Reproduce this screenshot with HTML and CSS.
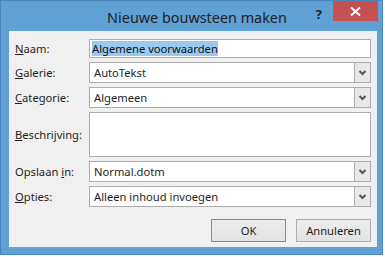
FILE: index.html
```html
<!DOCTYPE html>
<html lang="nl">
<head>
  <meta charset="UTF-8">
  <title>Nieuwe bouwsteen maken</title>
  <link rel="stylesheet" href="styles.css">
</head>
<body>
  <div class="window">
    <div class="titlebar">
      <span class="title">Nieuwe bouwsteen maken</span>
      <span class="help">?</span>
      <span class="close">
        <svg width="11" height="9" viewBox="0 0 11 9"><path d="M1 0.5 L10 8.5 M10 0.5 L1 8.5" stroke="#fff" stroke-width="2"/></svg>
      </span>
    </div>

    <!-- Dialoog inhoud -->
    <div class="client">
      <div class="row">
        <label><u>N</u>aam:</label>
        <div class="field input"><span class="selected">Algemene voorwaarden</span></div>
      </div>
      <div class="row">
        <label><u>G</u>alerie:</label>
        <div class="field select"><span class="value">AutoTekst</span><span class="arrow"><svg width="9" height="6" viewBox="0 0 9 6"><path d="M1.5 1 L4.5 4 L7.5 1" stroke="#555" stroke-width="2" fill="none"/></svg></span></div>
      </div>
      <div class="row">
        <label><u>C</u>ategorie:</label>
        <div class="field select"><span class="value">Algemeen</span><span class="arrow"><svg width="9" height="6" viewBox="0 0 9 6"><path d="M1.5 1 L4.5 4 L7.5 1" stroke="#555" stroke-width="2" fill="none"/></svg></span></div>
      </div>
      <div class="row tall">
        <label><u>B</u>eschrijving:</label>
        <div class="field textarea"></div>
      </div>
      <div class="row">
        <label>Opslaan <u>i</u>n:</label>
        <div class="field select"><span class="value">Normal.dotm</span><span class="arrow"><svg width="9" height="6" viewBox="0 0 9 6"><path d="M1.5 1 L4.5 4 L7.5 1" stroke="#555" stroke-width="2" fill="none"/></svg></span></div>
      </div>
      <div class="row">
        <label><u>O</u>pties:</label>
        <div class="field select"><span class="value">Alleen inhoud invoegen</span><span class="arrow"><svg width="9" height="6" viewBox="0 0 9 6"><path d="M1.5 1 L4.5 4 L7.5 1" stroke="#555" stroke-width="2" fill="none"/></svg></span></div>
      </div>
      <div class="buttons">
        <button class="btn default">OK</button>
        <button class="btn">Annuleren</button>
      </div>
    </div>
  </div>
</body>
</html>
```

FILE: styles.css
```css
body {
  margin: 0;
  background: #ffffff;
  font-family: "Noto Sans", "Open Sans", sans-serif;
  font-size: 11.2px;
  color: #1e1e1e;
}
.window {
  width: 383px;
  height: 255px;
  box-sizing: border-box;
  background: #5fa0d5;
  border: 1px solid #4b86bb;
  display: flex;
  flex-direction: column;
  padding: 0 5px 7px 8px;
}
.titlebar {
  height: 30px;
  position: relative;
  display: flex;
  justify-content: center;
  align-items: center;
}
.title {
  font-size: 14.4px;
  color: #1f1f1f;
  margin-top: 2px;
  margin-left: 8px;
}
.help {
  position: absolute;
  right: 55px;
  top: 4px;
  font-weight: bold;
  font-size: 13px;
  color: #1f1f1f;
}
.close {
  position: absolute;
  right: -1px;
  top: 0;
  width: 45px;
  height: 20px;
  background: #c75050;
  display: flex;
  justify-content: center;
  align-items: center;
}
.client {
  flex: 1;
  background: #f0f0f0;
  padding: 8px 6px 0 6px;
  display: flex;
  flex-direction: column;
  gap: 4px;
}
.row {
  display: flex;
  align-items: center;
  height: 21px;
}
.row:first-child {
  height: 19px;
}
.row.tall {
  height: 45px;
}
.row label {
  width: 74px;
  flex: none;
}
.field {
  flex: 1;
  height: 100%;
  box-sizing: border-box;
  background: #ffffff;
  border: 1px solid #abadb3;
  display: flex;
  align-items: center;
}
.input {
  padding-left: 2px;
}
.selected {
  background: #99c9ef;
  color: #111;
  line-height: 15px;
}
.select {
  border-color: #acacac;
}
.value {
  flex: 1;
  padding-left: 4px;
}
.arrow {
  width: 16px;
  height: 100%;
  box-sizing: border-box;
  background: #e8e8e8;
  border-left: 1px solid #acacac;
  display: flex;
  justify-content: center;
  align-items: center;
}
.buttons {
  display: flex;
  justify-content: flex-end;
  gap: 10px;
  margin-top: 8px;
}
.btn {
  width: 75px;
  height: 23px;
  font-family: inherit;
  font-size: 11.2px;
  color: #1e1e1e;
  background: linear-gradient(#ececec, #e2e2e2);
  border: 1px solid #adadad;
  padding: 0;
}
.btn.default {
  border-color: #3c9bea;
}
```
